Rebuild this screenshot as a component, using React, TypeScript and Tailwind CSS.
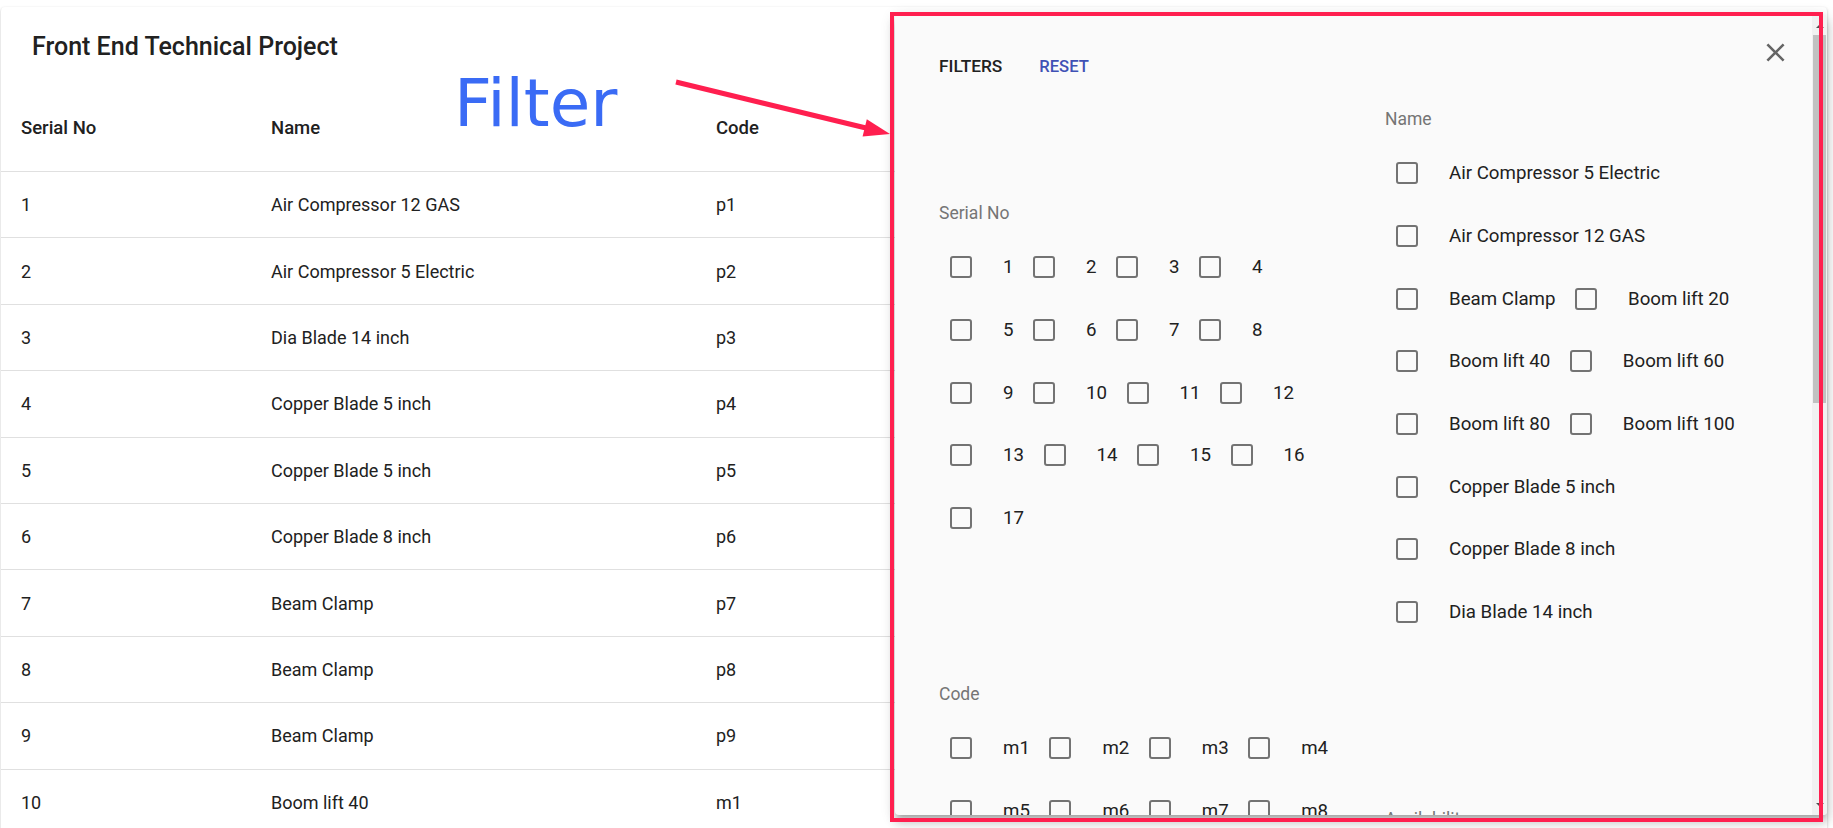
import React from 'react'

const tableRows = [
  ['1', 'Air Compressor 12 GAS', 'p1'],
  ['2', 'Air Compressor 5 Electric', 'p2'],
  ['3', 'Dia Blade 14 inch', 'p3'],
  ['4', 'Copper Blade 5 inch', 'p4'],
  ['5', 'Copper Blade 5 inch', 'p5'],
  ['6', 'Copper Blade 8 inch', 'p6'],
  ['7', 'Beam Clamp', 'p7'],
  ['8', 'Beam Clamp', 'p8'],
  ['9', 'Beam Clamp', 'p9'],
  ['10', 'Boom lift 40', 'm1'],
]

const serialRows = [
  ['1', '2', '3', '4'],
  ['5', '6', '7', '8'],
  ['9', '10', '11', '12'],
  ['13', '14', '15', '16'],
  ['17'],
]

const nameRows = [
  ['Air Compressor 5 Electric'],
  ['Air Compressor 12 GAS'],
  ['Beam Clamp', 'Boom lift 20'],
  ['Boom lift 40', 'Boom lift 60'],
  ['Boom lift 80', 'Boom lift 100'],
  ['Copper Blade 5 inch'],
  ['Copper Blade 8 inch'],
  ['Dia Blade 14 inch'],
]

const codeRows = [
  ['m1', 'm2', 'm3', 'm4'],
  ['m5', 'm6', 'm7', 'm8'],
  ['p1', 'p2', 'p3', 'p4'],
  ['p5', 'p6', 'p7', 'p8'],
  ['p9'],
]

const availabilityRows = [['In Stock', 'Out of Stock']]

function CheckBox() {
  return <span className="h-[22px] w-[22px] shrink-0 rounded-[3px] border-[2.5px] border-[#737373]" />
}

function CheckRow({ items }: { items: string[] }) {
  return (
    <div className="flex h-[62.7px] items-center pl-[11px]">
      {items.map((item) => (
        <label key={item} className="mr-[19.5px] flex items-center">
          <CheckBox />
          <span className="ml-[31px] whitespace-nowrap text-[18.7px] text-[#212121]">{item}</span>
        </label>
      ))}
    </div>
  )
}

function FilterColumn({ title, rows }: { title: string; rows: string[][] }) {
  return (
    <div>
      <div className="h-[24px] text-[17.5px] leading-[24px] text-[#757575]">{title}</div>
      <div className="mt-[11px]">
        {rows.map((r, i) => (
          <CheckRow key={i} items={r} />
        ))}
      </div>
    </div>
  )
}

export default function App() {
  return (
    <div className="relative h-[828px] w-full overflow-hidden bg-white font-['Roboto',sans-serif] text-[#212121]">
      {/* table card */}
      <div className="ml-[1px] mr-[6px] mt-[7px] h-[900px] rounded-[4px] bg-white shadow-[0_1px_3px_rgba(0,0,0,0.2),0_1px_1px_rgba(0,0,0,0.14)]">
        <div className="flex h-[79px] items-center pl-[31px]">
          <h6 className="text-[25px] font-medium">Front End Technical Project</h6>
        </div>
        <div className="grid h-[86px] grid-cols-[250px_445px_1fr] items-center border-b border-[#e0e0e0] pl-[20px] text-[18.5px] font-medium">
          <span>Serial No</span>
          <span>Name</span>
          <span>Code</span>
        </div>
        {tableRows.map(([no, name, code]) => (
          <div
            key={no}
            className="grid h-[66.4px] grid-cols-[250px_445px_1fr] items-center border-b border-[#e0e0e0] pl-[20px] text-[18px]"
          >
            <span>{no}</span>
            <span>{name}</span>
            <span>{code}</span>
          </div>
        ))}
      </div>

      {/* filter drawer */}
      <div className="absolute bottom-[13px] left-[895px] right-[6px] top-[14px] flex overflow-hidden rounded-[4px] bg-[#fafafa] shadow-[0_5px_5px_-3px_rgba(0,0,0,0.2),0_8px_10px_1px_rgba(0,0,0,0.14),0_3px_14px_2px_rgba(0,0,0,0.12)]">
        <div className="relative min-w-0 flex-1 pl-[44px] pt-[33px]">
          <div className="flex h-[40px] items-center">
            <span className="text-[17.3px] font-medium text-[#212121]">FILTERS</span>
            <button type="button" className="ml-[37px] text-[16.6px] font-medium text-[#3f51b5]">
              RESET
            </button>
          </div>
          <button type="button" aria-label="Close" className="absolute left-[865px] top-[23px] text-[#666]">
            <svg className="h-[31px] w-[31px]" viewBox="0 0 24 24" fill="currentColor">
              <path d="M19 6.41L17.59 5 12 10.59 6.41 5 5 6.41 10.59 12 5 17.59 6.41 19 12 13.41 17.59 19 19 17.59 13.41 12z" />
            </svg>
          </button>
          <div className="mt-[20px] grid grid-cols-[446px_1fr] items-center gap-y-[38.4px]">
            <FilterColumn title="Serial No" rows={serialRows} />
            <FilterColumn title="Name" rows={nameRows} />
            <FilterColumn title="Code" rows={codeRows} />
            <FilterColumn title="Availability" rows={availabilityRows} />
          </div>
        </div>
        {/* scrollbar */}
        <div className="flex w-[15px] shrink-0 flex-col bg-[#f1f1f1]">
          <div className="flex h-[17px] items-end justify-center pb-[3px]">
            <span className="h-0 w-0 border-x-[4px] border-b-[4px] border-x-transparent border-b-[#505050]" />
          </div>
          <div className="mx-[1px] mt-[4px] h-[368px] bg-[#c1c1c1]" />
          <div className="flex-1" />
          <div className="flex h-[17px] items-start justify-center pt-[5px]">
            <span className="h-0 w-0 border-x-[4px] border-t-[4px] border-x-transparent border-t-[#505050]" />
          </div>
        </div>
      </div>

      {/* annotation */}
      <div className="pointer-events-none absolute left-[454px] top-[71px] font-['DejaVu_Sans',sans-serif] text-[66px] leading-none text-[#3a6bf5]">
        Filter
      </div>
      <svg className="pointer-events-none absolute left-0 top-0" width="1833" height="828">
        <line x1="676" y1="82" x2="866" y2="128" stroke="#ff1f4f" strokeWidth="5" />
        <polygon points="890,134 866.8,119.2 862.6,136.6" fill="#ff1f4f" />
      </svg>
      <div className="pointer-events-none absolute left-[890px] top-[12px] h-[810px] w-[933px] border-[4.5px] border-[#ff1f4f]" />
    </div>
  )
}
